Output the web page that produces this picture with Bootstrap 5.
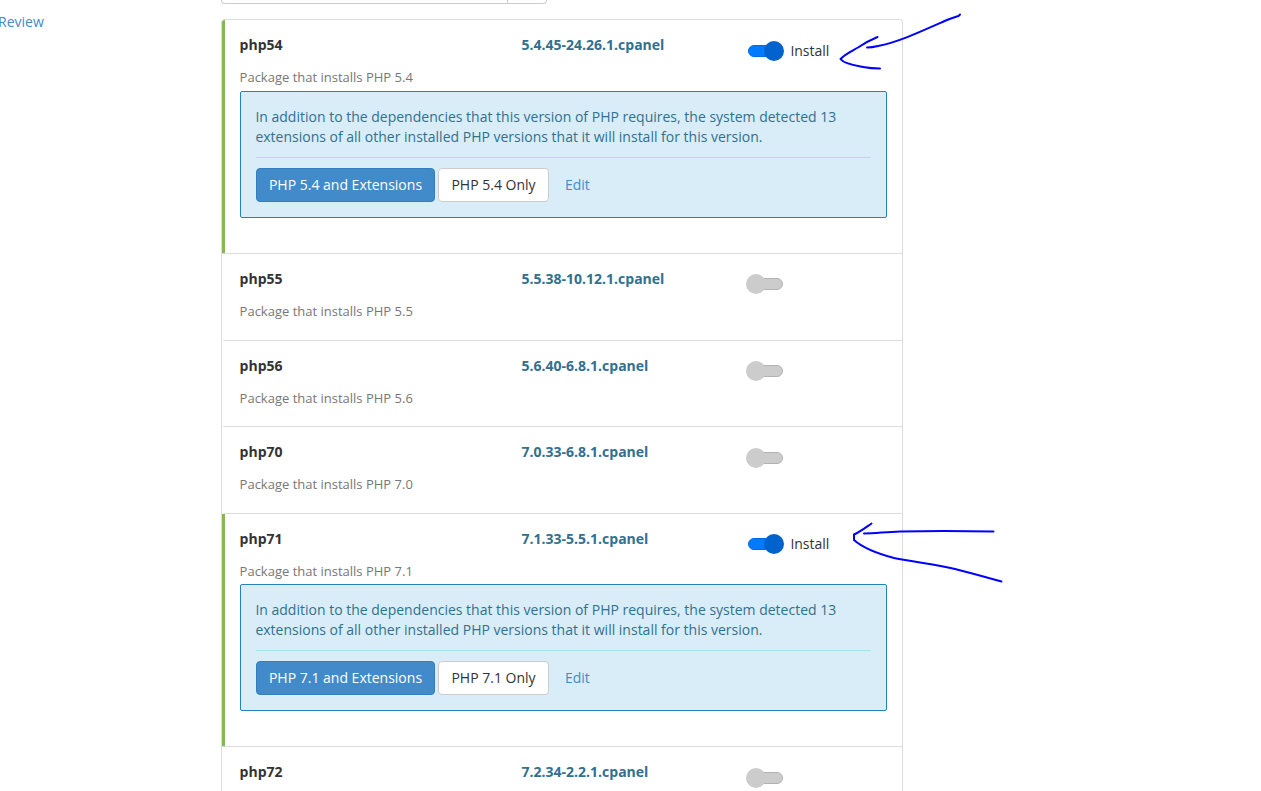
<!DOCTYPE html>
<html lang="en">
<head>
<meta charset="utf-8">
<title>PHP Versions</title>
<link href="https://cdn.jsdelivr.net/npm/bootstrap@5.3.0/dist/css/bootstrap.min.css" rel="stylesheet">
<style>
body{font-family:"Open Sans",sans-serif;font-size:14px;line-height:20px;color:#333;background:#fff;height:791px}
a{color:#428bca;text-decoration:none}
.side-links{width:223px;padding-top:12px;margin-left:-2px;flex:none}
.main-area{width:682px;flex:none}
.search-box{width:326px;height:4px;border:1px solid #ccc;border-top:0;border-radius:0 0 4px 4px}
.search-box div{width:286px;border-right:1px solid #ccc}
.pkg-list{margin-top:15px;height:772px;overflow:hidden;border:1px solid #dcdcdc;border-bottom:0;border-radius:4px 4px 0 0}
.pkg{flex:none;height:87px;padding:15px 15px 0 14.600px;border:0;border-bottom:1px solid #dcdcdc;border-left:3px solid transparent;color:#333;background:transparent;border-radius:0}
.pkg.h86{height:86px}
.pkg.open{height:233px;border-left:0;padding-left:17.600px;position:relative}
.pkg.open::before{content:"";position:absolute;left:0;top:0;bottom:0;width:3px;background:#83b955}
.pkg.first{height:234px}
.pkg.last-pkg{height:44px;border-bottom:0}
.pkg-head{height:32px}
.pkg-name{width:282px;font-weight:700;flex:none}
.pkg-version{width:224.400px;font-weight:700;color:#31708f;flex:none}
.pkg-desc{font-size:13px;color:#777;height:23px;line-height:20px}
.first .pkg-desc{height:24px}
.switch-wrap{height:20px;margin-top:5px}
.switch-wrap.low{margin-top:6px}
.toggle{width:38px;height:20px;flex:none;margin-right:6.400px}
.toggle svg{display:block}
.notice{height:127px;margin:0 0 0 .4px;padding:15px 15px 0;background:#d9edf8;border:1px solid #2a80b9;border-radius:2px;color:#31708f}
.notice p{margin:0 -1px 0 -.6px}
.notice hr{margin:10px 0;border-top:1px solid #a6e1ec;opacity:1;color:#a6e1ec}
.notice .btn{font-size:14px;line-height:20px;padding:6px 0;border-radius:4px}
.notice .btn-primary{background:#428bca;border-color:#357ebd;width:179px;margin-right:3px}
.notice .btn-plain{background:#fff;border:1px solid #ccc;color:#333;width:111px}
.notice .btn-edit{margin-left:15px;color:#428bca}
.ink{left:0;top:0;pointer-events:none}
</style>
<script src="https://cdn.jsdelivr.net/npm/bootstrap@5.3.0/dist/js/bootstrap.bundle.min.js"></script>
</head>
<body class="overflow-hidden position-relative">
<svg width="0" height="0" class="position-absolute">
  <symbol id="sw-on" viewBox="0 0 38 20"><rect x="2.500" y="4.500" width="33" height="11" rx="5.500" fill="#007bff" stroke="#006be0"/><circle cx="28" cy="10" r="10" fill="#0062cc"/></symbol>
  <symbol id="sw-off" viewBox="0 0 38 20"><rect x="2.500" y="4.500" width="34" height="11" rx="5.500" fill="#ccc" stroke="#b2b2b2"/><circle cx="10" cy="10" r="10" fill="#ccc"/></symbol>
</svg>
<div class="d-flex">
  <nav class="side-links"><a href="#">Review</a></nav>
  <main class="main-area">
    <div class="search-box d-flex"><div></div></div>
    <div class="list-group pkg-list">
      <div class="list-group-item pkg open first">
        <div class="pkg-head d-flex align-items-start"><div class="pkg-name">php54</div><div class="pkg-version">5.4.45-24.26.1.cpanel</div>
          <div class="switch-wrap low d-flex align-items-center"><span class="toggle"><svg width="38" height="20"><use href="#sw-on"/></svg></span>Install</div></div>
        <div class="pkg-desc">Package that installs PHP 5.4</div>
        <div class="notice alert"><p>In addition to the dependencies that this version of PHP requires, the system detected 13<br>extensions of all other installed PHP versions that it will install for this version.</p>
          <hr><div class="d-flex"><button class="btn btn-primary">PHP 5.4 and Extensions</button><button class="btn btn-plain">PHP 5.4 Only</button><a class="btn btn-edit" href="#">Edit</a></div></div>
      </div>
      <div class="list-group-item pkg">
        <div class="pkg-head d-flex align-items-start"><div class="pkg-name">php55</div><div class="pkg-version">5.5.38-10.12.1.cpanel</div><div class="switch-wrap"><svg class="toggle d-block" width="38" height="20"><use href="#sw-off"/></svg></div></div>
        <div class="pkg-desc">Package that installs PHP 5.5</div>
      </div>
      <div class="list-group-item pkg h86">
        <div class="pkg-head d-flex align-items-start"><div class="pkg-name">php56</div><div class="pkg-version">5.6.40-6.8.1.cpanel</div><div class="switch-wrap"><svg class="toggle d-block" width="38" height="20"><use href="#sw-off"/></svg></div></div>
        <div class="pkg-desc">Package that installs PHP 5.6</div>
      </div>
      <div class="list-group-item pkg">
        <div class="pkg-head d-flex align-items-start"><div class="pkg-name">php70</div><div class="pkg-version">7.0.33-6.8.1.cpanel</div><div class="switch-wrap low"><svg class="toggle d-block" width="38" height="20"><use href="#sw-off"/></svg></div></div>
        <div class="pkg-desc">Package that installs PHP 7.0</div>
      </div>
      <div class="list-group-item pkg open">
        <div class="pkg-head d-flex align-items-start"><div class="pkg-name">php71</div><div class="pkg-version">7.1.33-5.5.1.cpanel</div>
          <div class="switch-wrap d-flex align-items-center"><span class="toggle"><svg width="38" height="20"><use href="#sw-on"/></svg></span>Install</div></div>
        <div class="pkg-desc">Package that installs PHP 7.1</div>
        <div class="notice alert"><p>In addition to the dependencies that this version of PHP requires, the system detected 13<br>extensions of all other installed PHP versions that it will install for this version.</p>
          <hr><div class="d-flex"><button class="btn btn-primary">PHP 7.1 and Extensions</button><button class="btn btn-plain">PHP 7.1 Only</button><a class="btn btn-edit" href="#">Edit</a></div></div>
      </div>
      <div class="list-group-item pkg last-pkg">
        <div class="pkg-head d-flex align-items-start"><div class="pkg-name">php72</div><div class="pkg-version">7.2.34-2.2.1.cpanel</div><div class="switch-wrap low"><svg class="toggle d-block" width="38" height="20"><use href="#sw-off"/></svg></div></div>
      </div>
    </div>
  </main>
</div>
<!-- Hand-drawn arrows over the two enabled packages -->
<svg class="ink position-absolute" width="1261" height="791" fill="none" stroke="#0000ff" stroke-width="2" stroke-linecap="round" stroke-linejoin="round">
  <path d="M960 14.500L958.500 16C954 17.500 951 18 947 20C922 31 899 42 878 46Q872 47.500 867 47.500M877.500 37C868 41 863 44 858 47.500C851 51.500 845 54 840.500 59C844 64 855 65.500 863 67Q871 68.500 880 68.500"/>
  <path d="M993.500 531.500C960 531 925 531 900 531.500C885 532 875 533.500 864 533.500M871.500 523.500C865 528 860 532 854 534.500L854 540C864 549 879 554 894 558C914 562 938 565 955 569C971 573 987 577.500 1001.500 581.500"/>
</svg>
</body>
</html>
